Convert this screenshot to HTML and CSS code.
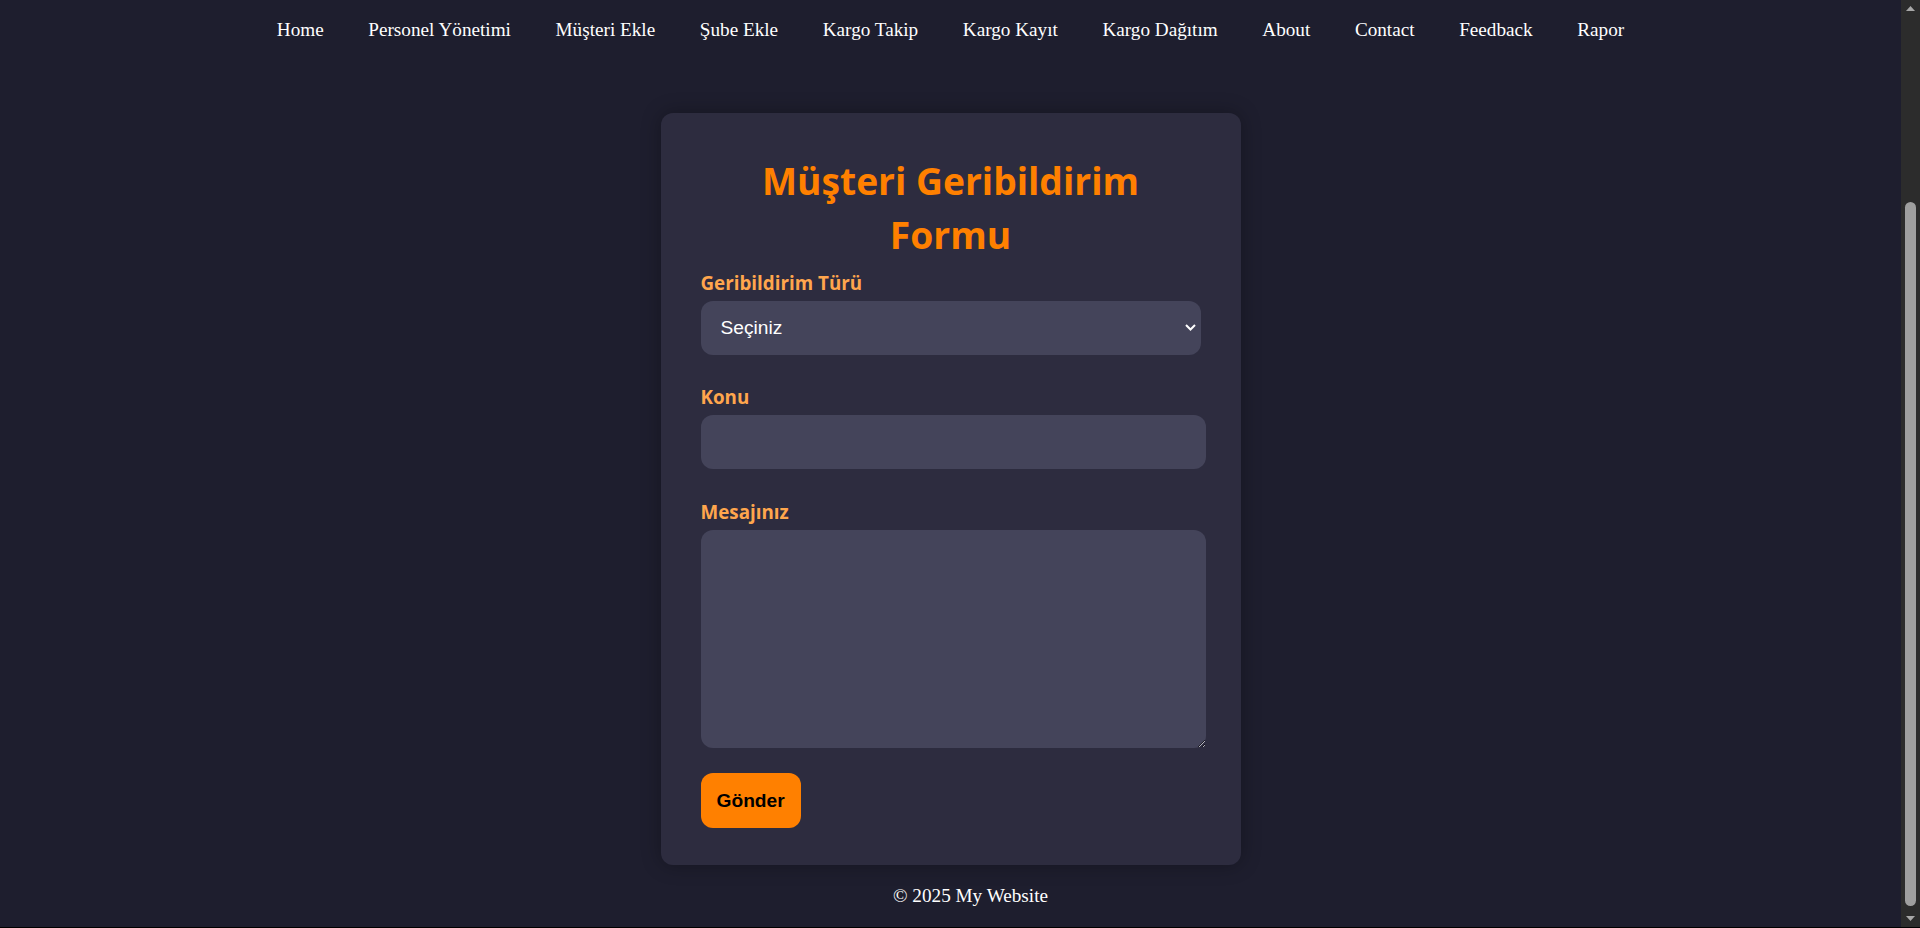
FILE: index.html
```html
<!DOCTYPE html>
<html lang="tr">
<head>
<meta charset="utf-8">
<title>Müşteri Geribildirim Formu</title>
<link rel="stylesheet" href="styles.css">
</head>
<body>
<div class="app">
  <div class="page">
    <nav class="nav">
      <ul class="nav-list">
        <li><a href="#">Home</a></li>
        <li><a href="#">Personel Yönetimi</a></li>
        <li><a href="#">Müşteri Ekle</a></li>
        <li><a href="#">Şube Ekle</a></li>
        <li><a href="#">Kargo Takip</a></li>
        <li><a href="#">Kargo Kayıt</a></li>
        <li><a href="#">Kargo Dağıtım</a></li>
        <li><a href="#">About</a></li>
        <li><a href="#">Contact</a></li>
        <li><a href="#">Feedback</a></li>
        <li><a href="#">Rapor</a></li>
      </ul>
    </nav>
    <main class="main">
      <section class="card">
        <h2 class="card-title">Müşteri Geribildirim Formu</h2>
        <form class="form">
          <div class="field">
            <label class="field-label" for="type">Geribildirim Türü</label>
            <div class="select-wrap">
              <select id="type" class="select">
                <option>Seçiniz</option>
                <option>Öneri</option>
                <option>Şikayet</option>
                <option>Teşekkür</option>
              </select>
              <svg class="select-arrow" viewBox="0 0 11 7" aria-hidden="true"><path d="M1 1l4.5 4.5L10 1" fill="none" stroke="#fff" stroke-width="2"/></svg>
            </div>
          </div>
          <div class="field">
            <label class="field-label" for="subject">Konu</label>
            <input id="subject" class="text-input" type="text">
          </div>
          <div class="field field--message">
            <label class="field-label" for="message">Mesajınız</label>
            <textarea id="message" class="textarea"></textarea>
          </div>
          <button class="submit" type="submit">Gönder</button>
        </form>
      </section>
    </main>
    <footer class="footer">© 2025 My Website</footer>
  </div>
  <div class="scrollbar" aria-hidden="true">
    <span class="scrollbar-btn"><svg viewBox="0 0 9 5"><path d="M4.5 0L9 5H0z" fill="#a8a8a8"/></svg></span>
    <span class="scrollbar-track"><span class="scrollbar-thumb"></span></span>
    <span class="scrollbar-btn"><svg viewBox="0 0 9 5"><path d="M0 0H9L4.5 5z" fill="#a8a8a8"/></svg></span>
  </div>
</div>
</body>
</html>
```

FILE: styles.css
```css
* {
  box-sizing: border-box;
}

body {
  margin: 0;
  background: #1e1e2e;
  color: #fff;
  font-family: "Liberation Serif", "Times New Roman", serif;
  font-size: 19.2px;
  overflow: hidden;
}

.app {
  display: flex;
  height: 100vh;
  border-bottom: 1px solid #000;
}

.page {
  flex: 1;
  min-width: 0;
  display: flex;
  flex-direction: column;
}

/* scrollbar strip at the right edge */
.scrollbar {
  flex: none;
  width: 19px;
  display: flex;
  flex-direction: column;
  background: #2c2c2c;
}

.scrollbar-btn {
  height: 17px;
  display: flex;
  align-items: center;
  justify-content: center;
}

.scrollbar-btn svg {
  width: 9px;
  height: 5px;
}

.scrollbar-track {
  flex: 1;
  display: flex;
  flex-direction: column;
  justify-content: flex-end;
  padding: 0 4px 4px;
}

.scrollbar-thumb {
  height: 704px;
  border-radius: 6px;
  background: #9f9f9f;
}

.nav {
  padding: 19.2px 0;
}

.nav-list {
  list-style: none;
  margin: 0;
  padding: 0;
  display: flex;
  justify-content: center;
  gap: 44.6px;
  line-height: 22px;
}

.nav-list a {
  color: #fff;
  text-decoration: none;
}

.main {
  flex: 1;
  padding-top: 52.6px;
  display: flex;
  justify-content: center;
  align-items: flex-start;
}

.card {
  width: 580px;
  padding: 40px 40px 37px;
  background: #2d2c3f;
  border-radius: 12px;
  box-shadow: 0 0 20px rgba(0, 0, 0, 0.3);
}

.card-title {
  margin: 0 30px 8px;
  padding-top: 1px;
  color: #ff8000;
  font-family: "Open Sans", sans-serif;
  font-weight: 700;
  font-size: 37.2px;
  line-height: 54.5px;
  text-align: center;
}

.form {
  display: flex;
  flex-direction: column;
}

.field {
  display: flex;
  flex-direction: column;
  gap: 6px;
  margin-bottom: 30.5px;
}

.field--message {
  margin-bottom: 25px;
}

.field-label {
  color: #ffa64d;
  font-family: "Open Sans", sans-serif;
  font-weight: 700;
  font-size: 18.8px;
  line-height: 24px;
}

.select-wrap {
  position: relative;
  width: 100%;
}

.select,
.text-input,
.textarea {
  display: block;
  border: 0;
  border-radius: 12px;
  background: #44445a;
  color: #fff;
  font-family: "Liberation Sans", Arial, sans-serif;
  font-size: 19.2px;
  outline: none;
  color-scheme: dark;
}

.select {
  appearance: none;
  width: 100%;
  height: 54px;
  padding: 0 20px;
}

.select-arrow {
  position: absolute;
  right: 5px;
  top: 50%;
  width: 11px;
  height: 7px;
  margin-top: -3.5px;
  pointer-events: none;
}

.text-input {
  width: 505px;
  height: 54px;
  padding: 0 15px;
}

.textarea {
  width: 505px;
  height: 218px;
  padding: 15px;
  resize: vertical;
}

.submit {
  align-self: flex-start;
  padding: 16px;
  border: 0;
  border-radius: 12px;
  background: #ff8000;
  color: #000;
  font-family: "Liberation Sans", Arial, sans-serif;
  font-weight: 700;
  font-size: 19.2px;
  line-height: 23px;
}

.footer {
  padding: 20px 0 20px 40px;
  text-align: center;
  line-height: 22px;
}
```
